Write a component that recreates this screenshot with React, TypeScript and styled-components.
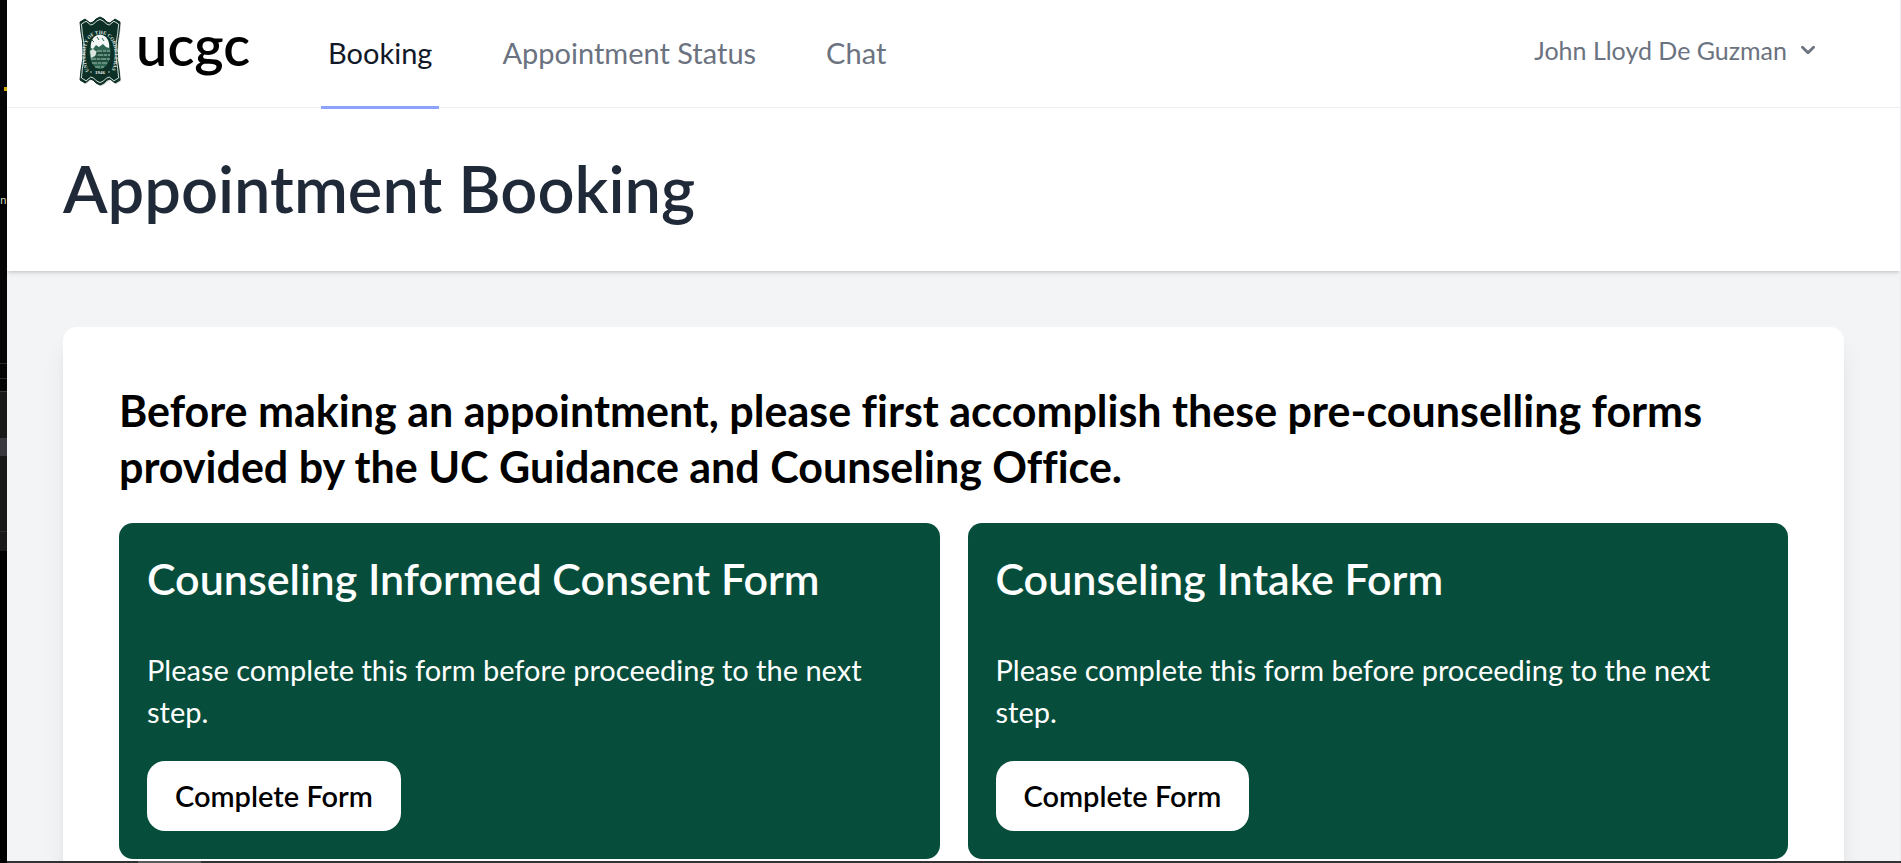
import React from 'react';
import styled, { createGlobalStyle } from 'styled-components';

const GlobalStyle = createGlobalStyle`
  *, *::before, *::after { box-sizing: border-box; }
  body {
    margin: 0;
    background: #f3f4f6;
    font-family: Lato, 'Open Sans', sans-serif;
    font-variant-ligatures: none;
    color: #000;
  }
  h1, h2, h3, p { margin: 0; }
`;

const Desktop = styled.div`
  display: grid;
  grid-template-columns: 7px minmax(0, 1fr);
  height: 100vh;
  overflow: hidden;
`;

const EditorStrip = styled.aside`
  display: flex;
  flex-direction: column;
  background: #000;
  overflow: hidden;
`;

const StripBand = styled.div<{ $height: number; $color: string; $line?: string }>`
  flex: none;
  height: ${(p) => p.$height}px;
  background: ${(p) => p.$color};
  border-bottom: 1px solid ${(p) => p.$line ?? p.$color};
`;

const StripMark = styled.div`
  flex: none;
  align-self: flex-end;
  width: 3px;
  height: 4px;
  background: #d3a900;
`;

const StripCode = styled.div`
  flex: none;
  height: 12px;
  font: 11px/12px 'Liberation Mono', monospace;
  color: #d8dcc0;
`;

const Window = styled.div`
  display: grid;
  grid-template-rows: minmax(0, 1fr) 2px;
  min-height: 0;
`;

const Page = styled.div`
  overflow: hidden;
  background: #f3f4f6;
  border-right: 1px solid #ececee;
`;

const Taskbar = styled.div`
  display: flex;
  padding-left: 131px;
  background: #323232;
`;

const TaskbarItem = styled.div`
  width: 63px;
  background: #5a5a5a;
`;

const NavBar = styled.nav`
  position: relative;
  z-index: 1;
  display: flex;
  align-items: stretch;
  height: 108px;
  padding: 0 78px 0 71px;
  background: #fff;
  border-bottom: 1px solid #eeeff1;
`;

const Brand = styled.a`
  display: flex;
  align-items: center;
  gap: 14px;
  padding-bottom: 5px;
  color: #000;
  text-decoration: none;
`;

const BrandName = styled.span`
  font-size: 56px;
  font-weight: 600;
  line-height: 66px;
  padding-bottom: 12px;
`;

const NavLinks = styled.div`
  display: flex;
  gap: 56px;
  margin-left: 71px;
`;

const NavLink = styled.a<{ $active?: boolean }>`
  display: flex;
  align-items: center;
  height: 109px;
  padding: 0 7px;
  border-bottom: 3px solid ${(p) => (p.$active ? '#8da2fb' : 'transparent')};
  color: ${(p) => (p.$active ? '#111827' : '#6b7280')};
  font-size: 29px;
  line-height: 36px;
  text-decoration: none;
`;

const UserButton = styled.button`
  display: flex;
  align-items: center;
  gap: 7px;
  margin-left: auto;
  padding: 0 0 7px;
  border: 0;
  background: none;
  color: #6b7280;
  font: 25px/30px Lato, 'Open Sans', sans-serif;
  cursor: pointer;
`;

const PageHeader = styled.header`
  position: relative;
  padding: 49px 56px 51px;
  background: #fff;
  box-shadow: 0 2px 5px rgba(0, 0, 0, 0.1), 0 2px 3px -1px rgba(0, 0, 0, 0.1);
`;

const PageTitle = styled.h1`
  color: #1f2937;
  font-size: 65px;
  font-weight: 600;
  line-height: 63px;
`;

const Main = styled.main`
  padding: 56px;
`;

const Panel = styled.section`
  padding: 56px;
  border-radius: 14px;
  background: #fff;
  box-shadow: 0 18px 26px -5px rgba(0, 0, 0, 0.1), 0 7px 11px -7px rgba(0, 0, 0, 0.1);
`;

const Intro = styled.h2`
  margin-bottom: 28px;
  font-size: 43px;
  font-weight: 700;
  line-height: 56px;
`;

const FormGrid = styled.div`
  display: grid;
  grid-template-columns: repeat(2, minmax(0, 1fr));
  gap: 28px;
`;

const FormCard = styled.article`
  padding: 28px;
  border-radius: 14px;
  background: #064e3b;
  color: #fff;
`;

const FormTitle = styled.h3`
  margin-bottom: 42px;
  font-size: 43px;
  font-weight: 600;
  line-height: 56px;
`;

const FormText = styled.p`
  margin-bottom: 28px;
  font-size: 29px;
  line-height: 42px;
`;

const FormButton = styled.button`
  display: block;
  padding: 14px 28px;
  border: 0;
  border-radius: 18px;
  background: #fff;
  color: #000;
  font: 600 29px/42px Lato, 'Open Sans', sans-serif;
  cursor: pointer;
`;

const forms = ['Counseling Informed Consent Form', 'Counseling Intake Form'];

const outline =
  'M6 2 L11 6 L14 5 L17 2 L21 0 L25 2 L28 5 L31 6 L36 2 L41 5 L40 15 Q36 34 40 53 L41 63 L36 66 L31 62 L28 63 L25 66 L21 68 L17 66 L14 63 L11 62 L6 66 L1 63 L2 53 Q6 34 2 15 L1 5 Z';

function Crest() {
  return (
    <svg width="44" height="71" viewBox="-1 -1 44 71" aria-hidden="true">
      <defs>
        <path id="crest-arc" d="M10 54 C4 44 4 17 21 17 S38 44 32 54" />
      </defs>
      <path d={outline} transform="translate(1 1)" fill="#8b9490" opacity="0.6" />
      <path d={outline} fill="#0d3026" stroke="#0d3026" strokeLinejoin="round" />
      <path
        d={outline}
        transform="translate(1.5 2.4) scale(0.93)"
        fill="none"
        stroke="#e3ebe7"
        strokeWidth="1"
        strokeLinejoin="round"
      />
      <ellipse cx="21" cy="35" rx="10.5" ry="17" fill="#2f6652" />
      <path d="M12 31 Q11 25 15 20 Q21 15 27 20 Q31 25 30 31 L27 30 L24 27 L20 30 L17 28 L14 32 Z" fill="#f3f6f4" />
      <path d="M13 23 L15 25 M18 20 L20 23 M23 21 L25 24" stroke="#2f6652" strokeWidth="1" />
      <path d="M11 34 L14 32 L18 35 L16 39 L12 41 Z" fill="#dce7e1" />
      <path
        d="M18 34 H31 M19 38 H31 M12 42 H31 M13 46 H29 M16 50 H26"
        fill="none"
        stroke="#9bb8aa"
        strokeWidth="1"
        strokeDasharray="5 1 3 1"
      />
      <path d="M17 36 H31 M16 40 H31 M13 44 H29" stroke="#17382d" strokeWidth="1" />
      <text fill="#dfe8e3" fontFamily="Liberation Serif, serif" fontSize="5" fontWeight="700">
        <textPath href="#crest-arc">UNIVERSITY OF THE CORDILLERAS</textPath>
      </text>
      <text x="21" y="57" textAnchor="middle" fill="#e3ebe7" fontFamily="Liberation Serif, serif" fontSize="5" fontWeight="700">
        1946
      </text>
      <circle cx="12" cy="55" r="0.8" fill="#b9c9c1" />
      <circle cx="30" cy="55" r="0.8" fill="#b9c9c1" />
    </svg>
  );
}

function ChevronDown() {
  return (
    <svg width="28" height="28" viewBox="0 0 20 20" fill="currentColor" aria-hidden="true">
      <path
        fillRule="evenodd"
        clipRule="evenodd"
        d="M5.293 7.293a1 1 0 011.414 0L10 10.586l3.293-3.293a1 1 0 111.414 1.414l-4 4a1 1 0 01-1.414 0l-4-4a1 1 0 010-1.414z"
      />
    </svg>
  );
}

export default function App() {
  return (
    <>
      <GlobalStyle />
      <Desktop>
        <EditorStrip aria-hidden="true">
          <StripBand $height={87} $color="#050505" />
          <StripMark />
          <StripBand $height={104} $color="#050505" />
          <StripCode>n</StripCode>
          <StripBand $height={157} $color="#050505" $line="#2b2b2b" />
          <StripBand $height={15} $color="#050505" $line="#2b2b2b" />
          <StripBand $height={13} $color="#050505" $line="#3a3a3a" />
          <StripBand $height={46} $color="#181818" />
          <StripBand $height={18} $color="#37373d" />
          <StripBand $height={76} $color="#181818" $line="#2b2b2b" />
          <StripBand $height={19} $color="#181818" />
        </EditorStrip>
        <Window>
          <Page>
            <NavBar>
              <Brand href="#home">
                <Crest />
                <BrandName>ucgc</BrandName>
              </Brand>
              <NavLinks>
                <NavLink href="#booking" $active aria-current="page">
                  Booking
                </NavLink>
                <NavLink href="#status">Appointment Status</NavLink>
                <NavLink href="#chat">Chat</NavLink>
              </NavLinks>
              <UserButton type="button" aria-haspopup="menu">
                John Lloyd De Guzman
                <ChevronDown />
              </UserButton>
            </NavBar>
            <PageHeader>
              <PageTitle>Appointment Booking</PageTitle>
            </PageHeader>
            <Main>
              <Panel>
                <Intro>
                  Before making an appointment, please first accomplish these pre-counselling forms provided by the UC
                  Guidance and Counseling Office.
                </Intro>
                <FormGrid>
                  {forms.map((title) => (
                    <FormCard key={title}>
                      <FormTitle>{title}</FormTitle>
                      <FormText>Please complete this form before proceeding to the next step.</FormText>
                      <FormButton type="button">Complete Form</FormButton>
                    </FormCard>
                  ))}
                </FormGrid>
              </Panel>
            </Main>
          </Page>
          <Taskbar>
            <TaskbarItem />
          </Taskbar>
        </Window>
      </Desktop>
    </>
  );
}
